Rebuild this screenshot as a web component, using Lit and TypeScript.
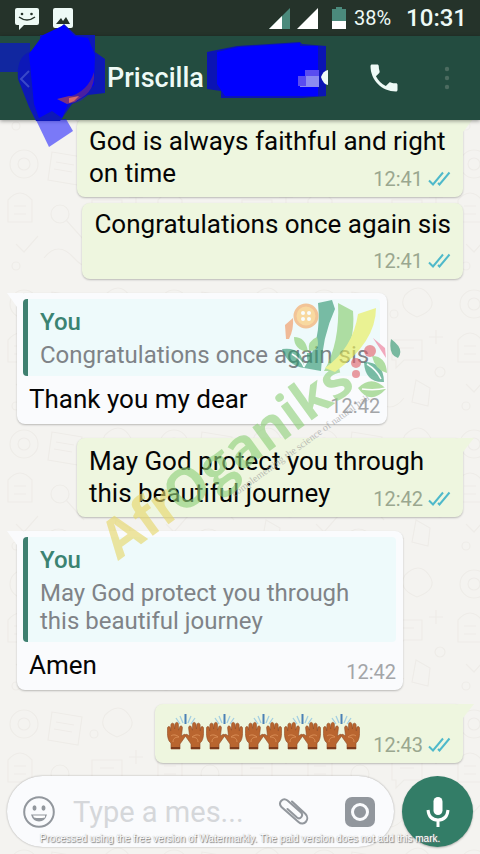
import { LitElement, html, svg, css, nothing } from "lit";
import { customElement, property } from "lit/decorators.js";

const ticks = html`<svg class="ticks" width="24" height="18" viewBox="0 0 24 18" aria-label="Read">
  <path d="M2 10.500 6 14.500 16 2.500M11 13 12.500 14.500 22.500 2.500" />
</svg>`;

@customElement("chat-bubble")
class ChatBubble extends LitElement {
  static styles = css`
    :host { display: flex; }
    :host([mine]) { justify-content: flex-end; }
    .bubble {
      position: relative; box-sizing: border-box; display: flex; flex-direction: column;
      background: #fafbfd; border-radius: 8px; padding: 6px 7px 8px 6px;
      box-shadow: 0 1px 2px #0000003d; max-width: 100%;
    }
    .wide { width: 386px; }
    .mine { background: #eef6df; padding: 7px 12px 8px; }
    .tight { padding-top: 5px; }
    .tail { position: absolute; top: 0; left: -10px; fill: #fafbfd; }
    .mine .tail { left: auto; right: -11px; fill: #eef6df; }
    .text { margin: 0; font-size: 26px; line-height: 32px; color: #050505; white-space: pre-line; }
    .reply { padding: 7px 6px 1px; }
    .meta {
      display: flex; align-items: center; align-self: flex-end; gap: 4px;
      font-size: 20px; line-height: 20px; height: 20px; margin-top: -20px;
      color: #a3a5a8; white-space: nowrap;
    }
    .mine .meta { color: #9aa78f; }
    .below .meta { margin-top: 11px; }
    .row { flex-direction: row; gap: 13px; padding-top: 10px; }
    .row .meta { margin-top: 0; }
    .emoji { display: flex; gap: 2px; height: 41px; }
    .ticks { fill: none; stroke: #4fb9ca; stroke-width: 2; }
    .quote {
      margin: 0; border-left: 5px solid #3f8070; border-radius: 4px; background: #eefafb;
      padding: 7px 11px 7px 12px;
    }
    .who { font-size: 24px; line-height: 33px; font-weight: 500; color: #3b8372; }
    .said { margin: 2px 0 0; font-size: 24px; line-height: 28px; color: #7f8387; white-space: pre-line; }
  `;
  @property({ type: Boolean, reflect: true }) mine = false;
  @property() text = "";
  @property() time = "";
  @property() quote = "";
  @property() kind = "";
  @property({ type: Boolean }) tail = false;
  @property({ type: Number }) hands = 0;

  raisedHands() {
    return html`<svg width="37" height="37" viewBox="0 0 37 37" role="img" aria-label="Raising hands">
      <g fill="none" stroke="#a3cfe2" stroke-width="1.300">
        <path d="M9 4l4 6M13 2l3 7M24 2l-3 7M28 4l-4 6" />
        <path d="M18.500 0v10" stroke="#4a80b5" stroke-width="2" />
      </g>
      ${[0, 1].map(
        (side) => svg`<g transform=${side ? "translate(37 0) scale(-1 1)" : ""}>
          <path fill="#b9652f" stroke="#8f4c26" stroke-width=".6" stroke-linejoin="round"
            d="M4 35V29C1 27 0 22 .500 14c.200-2 2.500-2 2.800 0l.400 3 .200-6c.200-2.500 3-2.500 3.300 0l.400 4 .500-5c.300-2.300 3.200-2 3.300.200l.100 6 1-3c.600-2 3-1.500 2.900.500L14.500 22l2.300-1.500c1.500-.700 2.500.600 1.500 2L13 30v5z" />
          <path d="M4 22c2-2 6-1 8 1M6 28c0-4 3-5 6-5" fill="none" stroke="#d98d55" stroke-width="1" />
          <path d="M4 33h9v2H4z" fill="#7c3b1c" />
        </g>`
      )}
    </svg>`;
  }

  render() {
    return html`<article class="bubble ${this.mine ? "mine" : ""} ${this.kind}">
      ${this.tail
        ? html`<svg class="tail" width="16" height="17" viewBox="0 0 16 17">
            <path d=${this.mine ? "M0 0H16L5 14V17H0z" : "M0 0H16V17H10V14z"} />
          </svg>`
        : nothing}
      ${this.quote
        ? html`<blockquote class="quote"><div class="who">You</div><p class="said">${this.quote}</p></blockquote>`
        : nothing}
      ${this.hands
        ? html`<div class="emoji">${Array.from({ length: this.hands }, () => this.raisedHands())}</div>`
        : html`<p class="text ${this.quote ? "reply" : ""}">${this.text}</p>`}
      <div class="meta"><time>${this.time}</time>${this.mine ? ticks : nothing}</div>
    </article>`;
  }
}

@customElement("app-root")
class AppRoot extends LitElement {
  static styles = css`
    :host {
      position: relative; isolation: isolate; display: flex; flex-direction: column; height: 100vh; overflow: hidden;
      font-family: Roboto, "Noto Sans", sans-serif; background: #f4f3f0;
    }
    .status {
      display: flex; align-items: center; height: 36px; flex: none; padding: 0 13px 0 14px;
      background: #25332a; color: #eefaf6; box-sizing: border-box;
    }
    .status svg { display: block; }
    .pic { margin-left: 13px; }
    .signals { display: flex; align-items: center; margin-left: auto; gap: 7px; }
    .battery { margin-left: 3px; margin-right: -3px; }
    .percent { font-size: 20px; line-height: 24px; }
    .clock { font-size: 24px; line-height: 28px; font-weight: 500; margin-left: 8px; }
    .bar {
      display: flex; align-items: center; height: 84px; flex: none; padding: 0 21px 0 14px; box-sizing: border-box;
      background: #234c40; color: #eefaf6; box-shadow: 0 1px 4px #0006; z-index: 1;
    }
    button { border: 0; padding: 0; background: none; color: inherit; display: block; }
    button svg { display: block; }
    .avatar {
      width: 52px; height: 52px; border-radius: 50%; margin-left: 10px; background: #20308a;
    }
    .name { margin: 0 auto 0 13px; font-size: 27px; line-height: 32px; font-weight: 500; }
    .call { margin-right: 33px; }
    .scribble { position: absolute; left: 0; top: 0; z-index: 2; pointer-events: none; }
    .doodle { position: absolute; inset: 0; width: 100%; height: 100%; z-index: -1; }
    .chat {
      flex: 1; min-height: 0; overflow: hidden; display: flex; flex-direction: column;
      justify-content: flex-end; gap: 14px; padding: 0 17px 13px;
    }
    .pair { display: flex; flex-direction: column; gap: 6px; }
    .composer { display: flex; gap: 8px; padding: 0 7px 7px; flex: none; }
    .field {
      display: flex; align-items: center; flex: 1; min-width: 0; height: 71px; border-radius: 36px;
      background: #fafbfd; box-shadow: 0 0 2px #0005; padding: 0 18px 0 16px; box-sizing: border-box; color: #92979d;
    }
    input {
      flex: 1; min-width: 0; width: 0; border: 0; padding: 0; margin: 0 16px 0 18px; background: none; outline: 0;
      font-family: inherit; font-size: 29px; line-height: 36px; color: #222;
    }
    input::placeholder { color: #d5d7da; opacity: 1; }
    .camera { margin-left: 34px; }
    .mic {
      width: 71px; height: 71px; border-radius: 50%; background: #337d67; color: #fff; flex: none;
      display: flex; align-items: center; justify-content: center; box-shadow: 0 1px 2px #0004;
    }
    .brand {
      position: absolute; left: 80px; top: 290px; pointer-events: none; z-index: 3; opacity: 0.62; overflow: visible;
    }
    .brand text { font-family: "Open Sans", sans-serif; font-weight: 700; font-size: 54px; }
    .brand .motto { font-family: "Liberation Serif", serif; font-weight: 400; font-size: 10px; }
    .notice {
      position: absolute; left: 0; right: 0; bottom: 8px; margin: 0; text-align: center; z-index: 3;
      font-family: "Liberation Sans", sans-serif; font-size: 10px; line-height: 14px; color: #fff;
      text-shadow: 1px 1px 1px #777, 0 0 1px #aaa; white-space: nowrap; pointer-events: none;
    }
  `;

  render() {
    return html`
      <svg class="doodle" aria-hidden="true">
        <defs>
          <pattern id="d" width="150" height="140" patternUnits="userSpaceOnUse">
            <g fill="none" stroke="#eeece8" stroke-width="1.200">
              <circle cx="24" cy="24" r="14" /><circle cx="24" cy="24" r="6" />
              <path d="M52 12l30 5-4 28-30-5zM56 22l18 3M54 29l18 3" />
              <path d="M105 15q14-14 24 0t-12 22q-20-8-12-22zM8 60q12-14 24 0v22H8zM14 66h12M14 74h12" />
              <circle cx="60" cy="74" r="9" /><path d="M66 80l18 20M92 60h30v20h-18l-8 8v-8h-4zM100 68h14" />
              <path d="M16 104l8 8 14-16M44 118q14-18 30 0t30 0M116 100l14 8-2 18-16-4zM136 50v14M129 57h14" />
              <circle cx="16" cy="126" r="4" /><circle cx="94" cy="34" r="4" /><circle cx="140" cy="92" r="5" />
            </g>
          </pattern>
        </defs>
        <rect width="100%" height="100%" fill="url(#d)" />
      </svg>

      <div class="status">
        <svg width="26" height="24" viewBox="0 0 26 24">
          <path fill="#eefaf6" d="M3 2h20q2 0 2 2v13q0 2-2 2H10l-5 5v-5H3q-2 0-2-2V4q0-2 2-2z" />
          <path d="M5 11q8 6 16 0" fill="none" stroke="#25332a" stroke-width="1.500" />
          <circle cx="8" cy="8" r="1.300" fill="#25332a" /><circle cx="17.500" cy="8" r="1.300" fill="#25332a" />
        </svg>
        <svg class="pic" width="20" height="20" viewBox="0 0 20 20">
          <rect width="20" height="20" rx="2" fill="#eefaf6" />
          <path d="M3 16l5-6 2 3 3-4 4 7z" fill="#25332a" />
        </svg>
        <div class="signals">
          <svg width="21" height="21" viewBox="0 0 21 21"><path d="M0 21L21 0V21z" fill="#4b8a7c" /><path d="M0 21L13 8V21z" fill="#fff" /></svg>
          <svg width="21" height="21" viewBox="0 0 21 21"><path d="M0 21L21 0V21z" fill="#fff" /></svg>
          <svg class="battery" width="22" height="22" viewBox="0 0 22 22">
            <path d="M4 2h4V0h6v2h4v20H4z" fill="#4b8a7c" /><path d="M4 14h14v8H4z" fill="#fff" />
          </svg>
          <span class="percent">38%</span><span class="clock">10:31</span>
        </div>
      </div>

      <header class="bar">
        <button aria-label="Back"><svg width="18" height="22" viewBox="0 0 18 22"><path d="M14 3L6 11l8 8" fill="none" stroke="#4d7a90" stroke-width="2" /></svg></button>
        <div class="avatar"></div>
        <h1 class="name">Priscilla</h1>
        <button class="call" aria-label="Call">
          <svg width="36" height="36" viewBox="0 0 24 24" fill="currentColor">
            <path d="M6.620 10.790c1.440 2.830 3.760 5.140 6.590 6.590l2.200-2.200c.270-.270.670-.360 1.020-.240 1.120.370 2.330.570 3.570.570.550 0 1 .450 1 1V20c0 .550-.450 1-1 1-9.390 0-17-7.610-17-17 0-.550.450-1 1-1h3.500c.550 0 1 .450 1 1 0 1.250.200 2.450.570 3.570.110.350.030.740-.250 1.020l-2.200 2.200z" />
          </svg>
        </button>
        <button aria-label="More options">
          <svg width="24" height="24" viewBox="0 0 24 24" fill="#4c6b60"><circle cx="12" cy="3" r="2.200" /><circle cx="12" cy="12" r="2.200" /><circle cx="12" cy="21" r="2.200" /></svg>
        </button>
      </header>

      <svg class="scribble" width="340" height="150" viewBox="0 0 340 150" aria-hidden="true">
        <path d="M0 43H30V72H0z" fill="#1127a0" />
        <path d="M36 120l13 27 24-16-7-12z" fill="#00f" fill-opacity=".5" />
        <path d="M64 24l12 11h19v17l10 7v34l-17 2-16 9-12 17H36l-7-14-11-28q-2-21 11-27l11-5V35h12z" fill="#0d18b8" />
        <path d="M29 71l-8 8 8 8" fill="none" stroke="#3a48c8" stroke-width="2" />
        <path d="M64 25l11 11 13 2 7 17-1 30-16 14-10 5-6 14-10-7-13 7-5-14-5-50 14-19z" fill="#00f" />
        <path d="M94 72q2 24-25 31l-1-6q20-5 26-25z" fill="#4a1fa0" />
        <path d="M57 99l12-3 12 1-6 5-8 2z" fill="#7a3180" /><path d="M69 98l10-2-5 5-5 2z" fill="#d96a68" />
        <path d="M207 52l30-6 63-4 2 2 24 2v50l-24 2H221v-7l-14-2z" fill="#0b14b4" />
        <path d="M217 52l22-5 61-4v3h18v50H225l-8-12z" fill="#00f" />
        <path d="M300 76h19v11h-19z" fill="#8c8af0" /><path d="M305 70h14v6h-14zM298 76h8v10h-8z" fill="#5a4cf0" />
        <path d="M321 77q2-6 7-7v15q-5-1-7-8z" fill="#eefaf6" />
      </svg>

      <main class="chat">
        <div class="pair">
          <chat-bubble mine tail kind="wide" text=${"God is always faithful and right\non time"} time="12:41"></chat-bubble>
          <chat-bubble mine kind="tight below" text="Congratulations once again sis" time="12:41"></chat-bubble>
        </div>
        <chat-bubble tail quote="Congratulations once again sis" text="Thank you my dear" time="12:42"></chat-bubble>
        <chat-bubble mine tail kind="wide" text=${"May God protect you through\nthis beautiful journey"} time="12:42"></chat-bubble>
        <chat-bubble tail kind="wide" quote=${"May God protect you through\nthis beautiful journey"} text="Amen" time="12:42"></chat-bubble>
        <chat-bubble mine tail kind="row" hands="5" time="12:43"></chat-bubble>
      </main>

      <div class="composer">
        <div class="field">
          <button aria-label="Emoji">
            <svg width="32" height="32" viewBox="0 0 32 32">
              <circle cx="16" cy="16" r="14.800" fill="none" stroke="currentColor" stroke-width="2" />
              <ellipse cx="11.500" cy="12" rx="2" ry="2.700" fill="currentColor" /><ellipse cx="20.500" cy="12" rx="2" ry="2.700" fill="currentColor" />
              <path d="M8 18.500h16q-2 7-8 7t-8-7z" fill="currentColor" /><path d="M10 19.500h12v2q-6 1-11 0z" fill="#fff" />
            </svg>
          </button>
          <input type="text" aria-label="Message" placeholder="Type a mes..." />
          <button aria-label="Attach">
            <svg width="32" height="30" viewBox="0 0 32 30" fill="none" stroke="currentColor" stroke-width="2" stroke-linecap="round">
              <path d="M14 4.500L27.500 17c5 5-1.500 13-7 8L3.500 10C-.500 5.500 5 0 9.500 3.500L23 15.500c3 3-1 7.500-4 5L9.500 12" />
            </svg>
          </button>
          <button class="camera" aria-label="Camera">
            <svg width="32" height="30" viewBox="0 0 32 30">
              <rect x="1" width="30" height="30" rx="7" fill="currentColor" />
              <circle cx="16" cy="15" r="7.500" fill="none" stroke="#fafbfd" stroke-width="3" />
            </svg>
          </button>
        </div>
        <button class="mic" aria-label="Record voice message">
          <svg width="26" height="32" viewBox="0 0 26 32" fill="none" stroke="currentColor" stroke-width="3">
            <rect x="8.500" y="1" width="9" height="18" rx="4.500" fill="currentColor" stroke="none" />
            <path d="M3 14q1 10 10 10t10-10M13 24v7" />
          </svg>
        </button>
      </div>

      <svg class="brand" width="330" height="280" viewBox="0 0 330 280" aria-hidden="true">
        <g transform="translate(38 271) rotate(-36)">
          <text fill="#e6d768">Afr</text>
          <text x="77" fill="#8fd07a">Oganiks</text>
          <text class="motto" x="132" y="17" fill="#999">complementing the science of natural hair</text>
        </g>
        <g transform="translate(80 0)">
          <path d="M158 13l14-3 3 9q-13 28-14 62l-17-3q18-27 14-65z" fill="#2f9670" />
          <path d="M178 13l15 8q3 33-16 60h-13q16-28 14-68z" fill="#86cc6c" />
          <path d="M198 24l18-6q0 34-41 64l-10-4q28-20 33-54z" fill="#e9ee55" />
          <circle cx="146" cy="26" r="11" fill="#ffc56a" stroke="#f5a45a" stroke-width="3" />
          <g fill="#fff"><circle cx="143" cy="23" r="2" /><circle cx="149" cy="23" r="2" /><circle cx="143" cy="29" r="2" /><circle cx="149" cy="29" r="2" /></g>
          <path d="M133 28l-8 7 1 14h3q5-10 4-21z" fill="#f2935a" />
          <path d="M134 47q12 0 14 15-14-2-14-15zM157 47q-10 4-8 14 12 0 8-14z" fill="#86cc6c" />
          <path d="M122 59q21-3 22 19-16-2-22-19zM147 63h12l-3 13q-10 0-9-13z" fill="#2f9670" />
          <path d="M204 72q20 0 20 20-19 1-20-20zM231 49q14 10 7 19-10-3-7-19z" fill="#2f9670" />
          <path d="M198 98q14-14 28 1-16 17-28-1zM212 66q14 0 15 17-12-3-15-17z" fill="#86cc6c" />
          <path d="M202 99q13 2 24-1M132 64q9 5 12 13M207 74q10 6 14 15" fill="none" stroke="#fff" stroke-width="1.500" />
          <path d="M213 48l12 10 1 10z" fill="#ed7695" />
          <g fill="#e3606a"><circle cx="210" cy="61" r="6" /><circle cx="196" cy="73" r="5" /><circle cx="196" cy="84" r="4" /></g>
        </g>
      </svg>

      <p class="notice">Processed using the free version of Watermarkly. The paid version does not add this mark.</p>
    `;
  }
}
